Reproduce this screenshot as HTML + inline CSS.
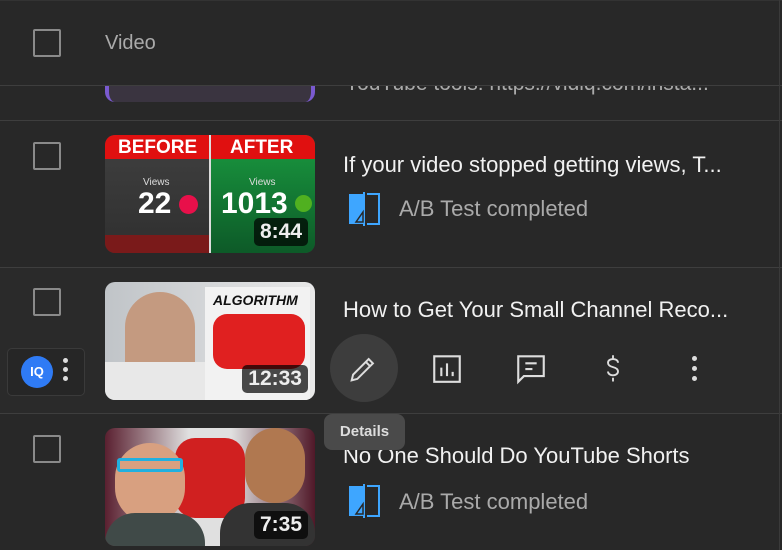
<!DOCTYPE html>
<html><head><style>
body{margin:0;width:782px;height:550px;background:#282828;overflow:hidden;font-family:"Liberation Sans",Arial,sans-serif;position:relative;color:#f1f1f1}
.a{position:absolute}
.hl{position:absolute;left:0;width:782px;height:1px;background:#3e3e3e}
.cb{position:absolute;left:33px;width:28px;height:28px;border:2px solid #8a8a8a;border-radius:2px;box-sizing:border-box}
.th{position:absolute;left:105px;width:210px;height:118px;border-radius:10px;overflow:hidden}
.dur{position:absolute;right:7px;bottom:7px;background:rgba(0,0,0,.7);color:#eee;font-weight:bold;font-size:21px;padding:2px 6px;border-radius:5px}
.title{position:absolute;left:343px;font-size:22px;color:#f1f1f1;white-space:nowrap}
.ab{position:absolute;left:399px;font-size:22px;color:#aaa}
</style></head><body>
<div class="hl" style="top:0;background:#333"></div>
<div class="cb" style="top:29px"></div>
<div class="a" style="left:105px;top:32px;font-size:20px;color:#aaa">Video</div>
<div class="a" style="left:0;top:86px;width:782px;height:34px;overflow:hidden">
 <div class="a" style="left:105px;top:-20px;width:210px;height:36px;background:#3a3440;border-radius:0 0 10px 10px;border-left:4px solid #7a5ad0;border-right:4px solid #7a5ad0;box-sizing:border-box"></div>
 <div class="a" style="left:345px;top:-14px;font-size:21px;color:#aaa">YouTube tools: https://vidiq.com/insta...</div>
</div>
<div class="hl" style="top:85px"></div>
<div class="hl" style="top:120px"></div>
<!-- row2 -->
<div class="cb" style="top:142px"></div>
<div class="th" style="top:135px;background:#3a3a3a">
 <div class="a" style="left:0;top:0;width:105px;height:118px;background:linear-gradient(#404040,#2f2f2f)"></div>
 <div class="a" style="left:105px;top:0;width:105px;height:118px;background:linear-gradient(#1a9a40,#0d5a28)"></div>
 <div class="a" style="left:0;top:0;width:210px;height:24px;background:#e01010"></div>
 <div class="a" style="left:104px;top:0;width:2px;height:118px;background:#ddd"></div>
 <div class="a" style="left:13px;top:2px;font-weight:bold;font-size:19px;color:#fff">BEFORE</div>
 <div class="a" style="left:125px;top:2px;font-weight:bold;font-size:19px;color:#fff">AFTER</div>
 <div class="a" style="left:38px;top:42px;font-size:10px;color:#ddd">Views</div>
 <div class="a" style="left:33px;top:52px;font-size:30px;font-weight:bold;color:#fff">22</div>
 <div class="a" style="left:74px;top:60px;width:19px;height:19px;border-radius:50%;background:#e8104a"></div>
 <div class="a" style="left:144px;top:42px;font-size:10px;color:#ddd">Views</div>
 <div class="a" style="left:116px;top:52px;font-size:30px;font-weight:bold;color:#fff">1013</div>
 <div class="a" style="left:190px;top:60px;width:17px;height:17px;border-radius:50%;background:#50b020"></div>
 <div class="a" style="left:0;top:100px;width:104px;height:18px;background:#7a1a1a"></div>
 <div class="dur">8:44</div>
</div>
<div class="title" style="top:152px">If your video stopped getting views, T...</div>
<svg class="a" style="left:347px;top:192px" width="34" height="34" viewBox="0 0 34 34"><path d="M2 2h14v30H2z" fill="#3ea6ff"/><path d="M17 0v34" stroke="#3ea6ff" stroke-width="2"/><path d="M20 2h12v30H20" fill="none" stroke="#3ea6ff" stroke-width="2"/><path d="M9 30l7-10v10zM20 30l6-8 4 8z" fill="none" stroke="#282828" stroke-width="1.5"/></svg>
<div class="ab" style="top:196px">A/B Test completed</div>
<div class="hl" style="top:267px"></div>
<!-- row3 -->
<div class="a" style="left:0;top:268px;width:782px;height:145px;background:#2a2a2a"></div>
<div class="cb" style="top:288px"></div>
<div class="a" style="left:7px;top:348px;width:76px;height:46px;border:1px solid #3a3a3a;border-radius:5px;background:#262626"></div>
<div class="a" style="left:21px;top:356px;width:32px;height:32px;border-radius:50%;background:#2f7bf5;color:#fff;font-weight:bold;font-size:13px;text-align:center;line-height:32px">IQ</div>
<div class="a" style="left:63px;top:358px;width:5px;height:5px;border-radius:50%;background:#ddd;box-shadow:0 9px 0 #ddd,0 18px 0 #ddd"></div>
<div class="th" style="top:282px;background:linear-gradient(90deg,#c0c4c8,#e8e8e8)">
 <div class="a" style="left:20px;top:10px;width:70px;height:108px;background:#c49a80;border-radius:35px 35px 0 0"></div>
 <div class="a" style="left:0;top:80px;width:110px;height:40px;background:#e8e8e8"></div>
 <div class="a" style="left:100px;top:5px;width:105px;height:113px;background:#f2f2f2"></div>
 <div class="a" style="left:108px;top:10px;font-size:14px;font-weight:bold;font-style:italic;color:#111">ALGORITHM</div>
 <div class="a" style="left:108px;top:32px;width:92px;height:55px;background:#e02020;border-radius:14px"></div>
 <div class="dur">12:33</div>
</div>
<div class="title" style="top:297px">How to Get Your Small Channel Reco...</div>
<div class="a" style="left:330px;top:334px;width:68px;height:68px;border-radius:50%;background:#3d3d3d"></div>
<svg class="a" style="left:346px;top:352px" width="34" height="34" viewBox="0 0 24 24" fill="none" stroke="#ddd" stroke-width="1.4"><path d="M4 20l1-4L16 5l3 3L8 19z M14 7l3 3"/></svg>
<svg class="a" style="left:430px;top:352px" width="34" height="34" viewBox="0 0 24 24" fill="none" stroke="#ddd" stroke-width="1.5"><path d="M3 3h18v18H3z"/><path d="M8 17v-6M12 17V8M16 17v-3"/></svg>
<svg class="a" style="left:514px;top:352px" width="34" height="34" viewBox="0 0 24 24" fill="none" stroke="#ddd" stroke-width="1.5"><path d="M3 3h18v14H7l-4 4z"/><path d="M8 8h8M8 12h5"/></svg>
<svg class="a" style="left:598px;top:352px" width="30" height="34" viewBox="0 0 24 24" fill="none" stroke="#ddd" stroke-width="1.5"><path d="M16 7c0-2-2-3-4-3s-4 1-4 3 2 3 4 3.5 4 1.5 4 3.5-2 3-4 3-4-1-4-3M12 1v3M12 19v3"/></svg>
<div class="a" style="left:692px;top:356px;width:5px;height:5px;border-radius:50%;background:#ddd;box-shadow:0 10px 0 #ddd,0 20px 0 #ddd"></div>
<div class="hl" style="top:413px"></div>
<!-- row4 -->
<div class="cb" style="top:435px"></div>
<div class="th" style="top:428px;background:linear-gradient(90deg,#5a2030,#e0e0e0 40%,#e0e0e0 60%,#501828)">
 <div class="a" style="left:70px;top:10px;width:70px;height:80px;background:#d02020;border-radius:20px"></div>
 <div class="a" style="left:10px;top:15px;width:70px;height:80px;background:#d8a080;border-radius:35px"></div>
 <div class="a" style="left:12px;top:30px;width:66px;height:14px;border:3px solid #20b0e0;box-sizing:border-box;border-radius:3px"></div>
 <div class="a" style="left:0;top:85px;width:100px;height:40px;background:#404a48;border-radius:30px 30px 0 0"></div>
 <div class="a" style="left:140px;top:0;width:60px;height:75px;background:#b07850;border-radius:30px"></div>
 <div class="a" style="left:115px;top:75px;width:95px;height:45px;background:#333;border-radius:30px 30px 0 0"></div>
 <div class="dur">7:35</div>
</div>
<div class="title" style="top:443px">No One Should Do YouTube Shorts</div>
<svg class="a" style="left:347px;top:484px" width="34" height="34" viewBox="0 0 34 34"><path d="M2 2h14v30H2z" fill="#3ea6ff"/><path d="M17 0v34" stroke="#3ea6ff" stroke-width="2"/><path d="M20 2h12v30H20" fill="none" stroke="#3ea6ff" stroke-width="2"/><path d="M9 30l7-10v10zM20 30l6-8 4 8z" fill="none" stroke="#282828" stroke-width="1.5"/></svg>
<div class="ab" style="top:489px">A/B Test completed</div>
<div class="a" style="left:324px;top:414px;width:81px;height:36px;background:#4a4a4a;border-radius:8px;color:#ddd;font-weight:bold;font-size:15px;text-align:center;line-height:36px">Details</div>
<div class="a" style="left:779px;top:0;width:1px;height:550px;background:#3a3a3a"></div>
</body></html>
